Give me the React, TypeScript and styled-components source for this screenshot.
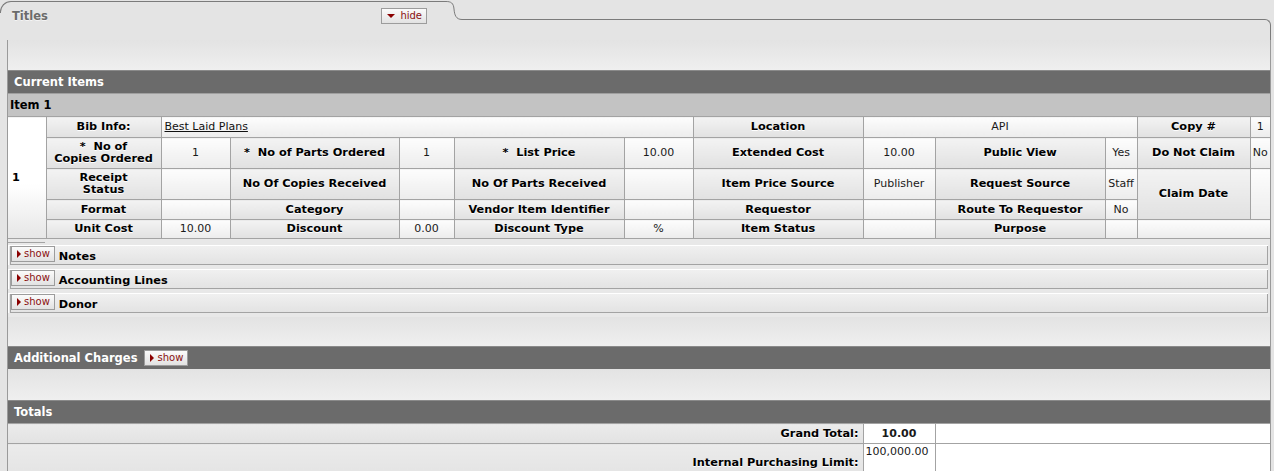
import React from "react";
import styled, { createGlobalStyle } from "styled-components";

const Global = createGlobalStyle`
  html, body { margin: 0; padding: 0; background: #e4e4e4; }
  body { font-family: "DejaVu Sans", Verdana, sans-serif; font-size: 11px; color: #000; }
  * { box-sizing: border-box; }
`;

const Page = styled.div`
  width: 1274px;
  height: 471px;
  overflow: hidden;
  padding-right: 3px;
  background: #e4e4e4;
`;

const TabRow = styled.div`
  display: flex;
  align-items: flex-start;
  height: 40px;
`;

const Tab = styled.div`
  flex: 0 0 446px;
  height: 12px;
  margin-top: 1px;
  border-top: 1px solid #7b7b7b;
  border-left: 1px solid #7b7b7b;
  border-top-left-radius: 11px;
`;

const TabInner = styled.div`
  display: flex;
  align-items: center;
  justify-content: space-between;
  height: 15px;
  margin-top: 6px;
  padding-left: 11px;
  padding-right: 19px;
`;

const TabTitle = styled.span`
  font-weight: bold;
  font-size: 11.5px;
  color: #6b6b6b;
  text-shadow: 0 1px 0 #f4f4f4;
`;

const TabJoint = styled.svg`
  flex: 0 0 16px;
  height: 21px;
  margin-top: 1px;
  display: block;
`;

const TabLine = styled.div`
  flex: 1;
  height: 21px;
  margin-top: 19px;
  border-top: 1px solid #7b7b7b;
  border-right: 1px solid #7b7b7b;
  border-top-right-radius: 6px;
`;

const Panel = styled.div`
  margin-left: 7px;
  border-left: 1px solid #9a9a9a;
  border-right: 1px solid #9a9a9a;
  background: #e8e8e8;
  height: 431px;
`;

const Spacer = styled.div<{ $h: number }>`
  height: ${(p) => p.$h}px;
  background: linear-gradient(#e3e3e3, #efefef);
`;

const SectionHeader = styled.div`
  display: flex;
  align-items: center;
  gap: 7px;
  height: 23px;
  padding-left: 6px;
  background: #6b6b6b;
  border-top: 1px solid #8a8a8a;
  color: #fff;
  font-weight: bold;
  font-size: 11.5px;
`;

const ItemHeader = styled.div`
  display: flex;
  align-items: center;
  height: 23px;
  padding-left: 2px;
  background: #c3c3c3;
  border-top: 1px solid #9f9f9f;
  font-weight: bold;
  font-size: 11.5px;
  color: #000;
`;

const Toggle = styled.button`
  display: inline-flex;
  align-items: center;
  gap: 3px;
  height: 16px;
  padding: 0 4px 0 5px;
  margin: 0;
  border: 1px solid #9c9c9c;
  background: linear-gradient(#fbfbfb, #e2e2e2);
  font-family: "DejaVu Sans", Verdana, sans-serif;
  font-size: 10px;
  line-height: 14px;
  color: #8a1010;
  cursor: pointer;
`;

const ArrowRight = styled.span`
  width: 0;
  height: 0;
  border-left: 4px solid #8a0000;
  border-top: 4px solid transparent;
  border-bottom: 4px solid transparent;
`;

const ArrowDown = styled.span`
  width: 0;
  height: 0;
  border-top: 4px solid #8a0000;
  border-left: 4px solid transparent;
  border-right: 4px solid transparent;
  margin-right: 2px;
`;

const ItemTable = styled.table`
  width: 1262px;
  border-collapse: collapse;
  table-layout: fixed;
  border-left: hidden;
  border-right: hidden;
`;

const Row = styled.tr<{ $h: number }>`
  height: ${(p) => p.$h}px;
`;

const Label = styled.th<{ $align?: string }>`
  border: 1px solid #a3a3a3;
  background: linear-gradient(#f3f3f3, #e1e1e1);
  font-weight: bold;
  font-size: 11.3px;
  line-height: 12px;
  text-align: ${(p) => p.$align ?? "center"};
  padding: 0 4px;
  color: #000;
  text-shadow: 0 1px 0 #fff;
`;

const Value = styled.td<{ $align?: string; $valign?: string; $bold?: boolean; $white?: boolean }>`
  border: 1px solid #a3a3a3;
  background: ${(p) => (p.$white ? "#fff" : "linear-gradient(#fdfdfd, #ececec)")};
  font-size: 11px;
  line-height: 12px;
  font-weight: ${(p) => (p.$bold ? "bold" : "normal")};
  text-align: ${(p) => p.$align ?? "center"};
  vertical-align: ${(p) => p.$valign ?? "middle"};
  padding: 0 2px;
  color: #1a1a1a;
  white-space: nowrap;
  overflow: hidden;
`;

const IndexCell = styled.th`
  border: 1px solid #a3a3a3;
  background: linear-gradient(#ffffff 55%, #e6e6e6);
  font-weight: bold;
  text-align: left;
  padding-left: 4px;
  font-size: 11.3px;
`;

const Link = styled.a`
  color: #111;
  text-decoration: underline;
  padding-left: 1px;
`;

const Stub = styled.div`
  width: 37px;
  height: 4px;
  border-bottom: 1px solid #a3a3a3;
`;

const SubSection = styled.div`
  margin: 2px 2px 4px 0;
  border-top: 1px solid #fff;
  border-left: 1px solid #fff;
  padding-left: 1px;
`;

const SubBar = styled.div`
  display: flex;
  align-items: flex-start;
  gap: 4px;
  height: 19px;
  border-left: 1px solid #a3a3a3;
  border-right: 1px solid #a3a3a3;
  border-bottom: 1px solid #a3a3a3;
  background: linear-gradient(#f0f0f0, #e3e3e3);
`;

const SubTitle = styled.span`
  font-weight: bold;
  font-size: 11.3px;
  line-height: 13px;
  padding-top: 4px;
  color: #000;
`;

const TotalsTable = styled.table`
  width: 1262px;
  border-collapse: collapse;
  table-layout: fixed;
  border-left: hidden;
  border-right: hidden;
`;

const TotalLabel = styled.th`
  border: 1px solid #a3a3a3;
  background: linear-gradient(#ebebeb, #e2e2e2);
  text-align: right;
  font-weight: bold;
  font-size: 11.3px;
  padding: 0 4px;
  text-shadow: 0 1px 0 #fff;
`;

const subs = ["Notes", "Accounting Lines", "Donor"];

export default function App() {
  return (
    <Page>
      <Global />
      <TabRow>
        <Tab>
          <TabInner>
            <TabTitle>Titles</TabTitle>
            <Toggle>
              <ArrowDown />
              hide
            </Toggle>
          </TabInner>
        </Tab>
        <TabJoint viewBox="0 0 16 21">
          <path
            d="M0 0.5 C5 0.5 7.5 2 8 8 C8.5 14 10 18.5 16 18.5"
            fill="none"
            stroke="#7b7b7b"
            strokeWidth="1"
          />
        </TabJoint>
        <TabLine />
      </TabRow>
      <Panel>
        <Spacer $h={30} />
        <SectionHeader>Current Items</SectionHeader>
        <ItemHeader>Item 1</ItemHeader>
        <ItemTable>
          <colgroup>
            {[38, 115, 69, 169, 55, 170, 69, 170, 72, 170, 32, 113, 20].map((w, i) => (
              <col key={i} style={{ width: w }} />
            ))}
          </colgroup>
          <tbody>
            <Row $h={21}>
              <IndexCell rowSpan={5}>1</IndexCell>
              <Label>Bib Info:</Label>
              <Value colSpan={5} $align="left">
                <Link href="#">Best Laid Plans</Link>
              </Value>
              <Label>Location</Label>
              <Value colSpan={3}>API</Value>
              <Label>Copy #</Label>
              <Value>1</Value>
            </Row>
            <Row $h={31}>
              <Label>
                *&nbsp; No of
                <br />
                Copies Ordered
              </Label>
              <Value>1</Value>
              <Label>*&nbsp; No of Parts Ordered</Label>
              <Value>1</Value>
              <Label>*&nbsp; List Price</Label>
              <Value>10.00</Value>
              <Label>Extended Cost</Label>
              <Value>10.00</Value>
              <Label>Public View</Label>
              <Value>Yes</Value>
              <Label>Do Not Claim</Label>
              <Value>No</Value>
            </Row>
            <Row $h={31}>
              <Label>
                Receipt
                <br />
                Status
              </Label>
              <Value />
              <Label>No Of Copies Received</Label>
              <Value />
              <Label>No Of Parts Received</Label>
              <Value />
              <Label>Item Price Source</Label>
              <Value>Publisher</Value>
              <Label>Request Source</Label>
              <Value>Staff</Value>
              <Label rowSpan={2}>Claim Date</Label>
              <Value rowSpan={2} />
            </Row>
            <Row $h={20}>
              <Label>Format</Label>
              <Value />
              <Label>Category</Label>
              <Value />
              <Label>Vendor Item Identifier</Label>
              <Value />
              <Label>Requestor</Label>
              <Value />
              <Label>Route To Requestor</Label>
              <Value>No</Value>
            </Row>
            <Row $h={19}>
              <Label>Unit Cost</Label>
              <Value>10.00</Value>
              <Label>Discount</Label>
              <Value>0.00</Value>
              <Label>Discount Type</Label>
              <Value>%</Value>
              <Label>Item Status</Label>
              <Value />
              <Label>Purpose</Label>
              <Value />
              <Value colSpan={2} />
            </Row>
          </tbody>
        </ItemTable>
        <Stub />
        {subs.map((s) => (
          <SubSection key={s}>
            <SubBar>
              <Toggle>
                <ArrowRight />
                show
              </Toggle>
              <SubTitle>{s}</SubTitle>
            </SubBar>
          </SubSection>
        ))}
        <Spacer $h={29} />
        <SectionHeader>
          Additional Charges
          <Toggle>
            <ArrowRight />
            show
          </Toggle>
        </SectionHeader>
        <Spacer $h={31} />
        <SectionHeader>Totals</SectionHeader>
        <TotalsTable>
          <colgroup>
            <col style={{ width: 855 }} />
            <col style={{ width: 72 }} />
            <col style={{ width: 335 }} />
          </colgroup>
          <tbody>
            <Row $h={20}>
              <TotalLabel>Grand Total:</TotalLabel>
              <Value $white $bold>
                10.00
              </Value>
              <Value $white />
            </Row>
            <Row $h={38}>
              <TotalLabel>Internal Purchasing Limit:</TotalLabel>
              <Value $white $valign="top" $align="left" style={{ paddingTop: 2 }}>
                100,000.00
              </Value>
              <Value $white />
            </Row>
          </tbody>
        </TotalsTable>
      </Panel>
    </Page>
  );
}
